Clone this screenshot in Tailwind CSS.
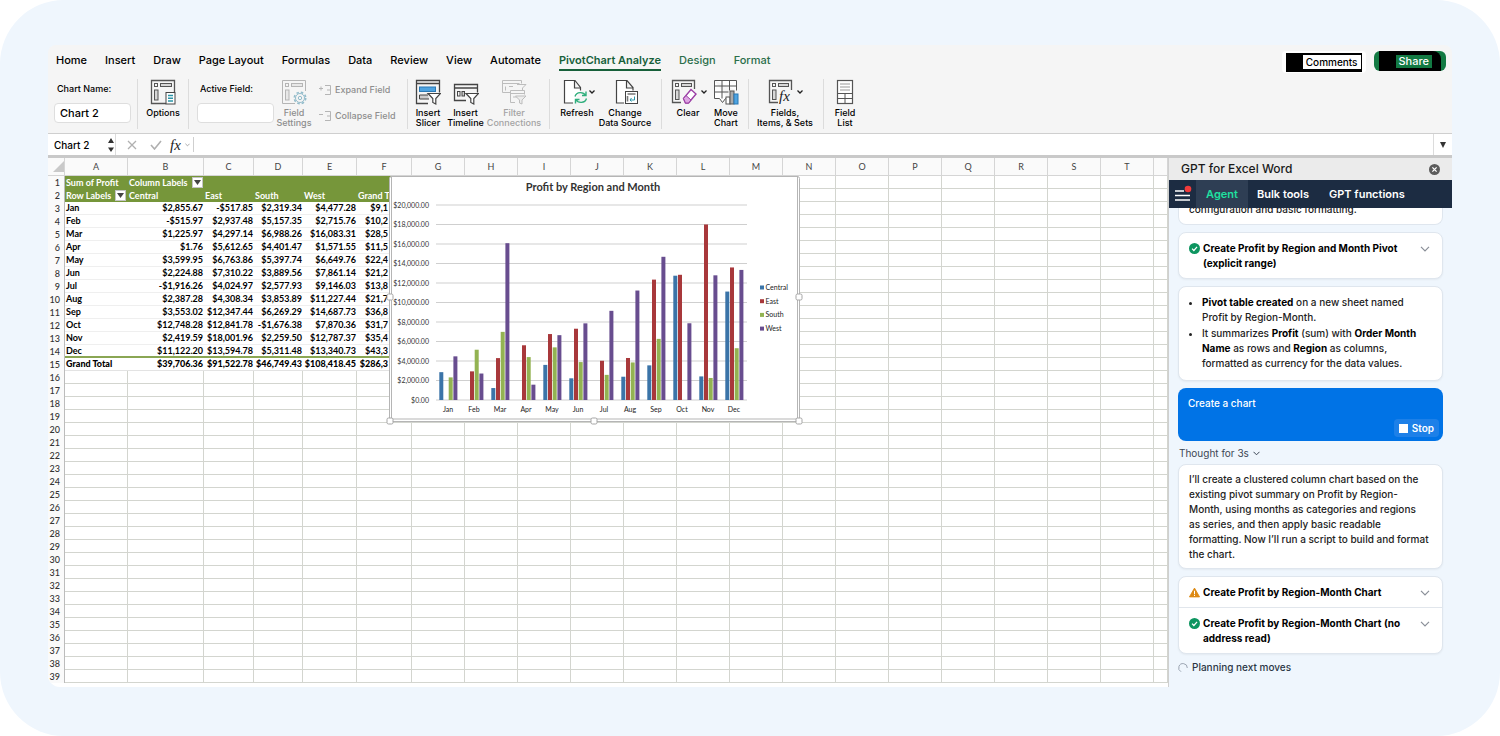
<!DOCTYPE html>
<html lang="en">

<head>
    <meta charset="UTF-8">
    <meta name="viewport" content="width=device-width, initial-scale=1.0">
    <title>Profit by Region-Month</title>
    <script src="https://cdn.jsdelivr.net/npm/@tailwindcss/browser@4"></script>
</head>

<body class="bg-white font-['Inter',sans-serif] text-[11px] text-[#1a1a1a]">
    <div class="bg-[#eff6fd] rounded-[64px] h-screen px-12 pt-[45px] pb-[49px] overflow-hidden">
        <div class="h-full flex flex-col rounded-bl-xl overflow-hidden">

            <!-- Tabs -->
            <header class="bg-[#f5f5f5] flex items-center justify-between pl-2 pr-[6px] h-[30px] rounded-t-lg shrink-0">
                <nav class="flex gap-[18px] font-medium text-black leading-[18px]">
                    <button>Home</button>
                    <button>Insert</button>
                    <button>Draw</button>
                    <button>Page Layout</button>
                    <button>Formulas</button>
                    <button>Data</button>
                    <button>Review</button>
                    <button>View</button>
                    <button>Automate</button>
                    <button class="relative font-semibold text-[#17603a]">PivotChart Analyze<span class="absolute inset-x-0 -bottom-[2px] h-[2px] bg-[#17603a]"></span></button>
                    <button class="text-[#2b6e4a]">Design</button>
                    <button class="text-[#2b6e4a]">Format</button>
                </nav>
                <div class="flex gap-2 font-medium pt-1">
                    <button class="bg-white rounded px-1 h-[22px] flex items-center text-[10px]">
                        <span class="bg-black pl-[17px] pr-[1px] h-[19px] flex items-center"><span class="bg-white px-[3px] leading-[14px] text-black">Comments</span></span>
                    </button>
                    <button class="bg-[#137a43] rounded-md pl-[5px] pr-[5px] h-[20px] flex items-center overflow-hidden">
                        <span class="bg-black pl-[17px] pr-[9px] h-[20px] flex items-center rounded-tr-lg"><span class="bg-[#137a43] px-[3px] leading-[13px] text-white">Share</span></span>
                    </button>
                </div>
            </header>

            <!-- Ribbon -->
            <section class="bg-[#f5f5f5] border-b border-[#cfcfcf] h-[59px] flex pt-1 pb-1 text-[9px] leading-[10px] font-medium text-black shrink-0">
                <div class="w-[90px] pl-[6px] border-r border-[#dcdcdc]">
                    <label for="chartName" class="block pl-[3px] pt-[5px] pb-[9px]">Chart Name:</label>
                    <input id="chartName" type="text" value="Chart 2" class="w-[77px] h-5 bg-white border border-[#dedede] rounded-sm px-[5px] text-[11px]">
                </div>
                <button class="w-[51px] border-r border-[#dcdcdc] flex flex-col items-center gap-[3px] justify-start">
                    <svg class="w-[26px] h-[26px]" viewBox="0 0 26 26" fill="none" stroke="#555">
                        <path d="M16 24.5H1.5v-23h23V13" stroke-width="1.3" />
                        <rect x="4.5" y="4.5" width="3" height="3" />
                        <rect x="10.5" y="4.5" width="11" height="3" fill="#d8d8d8" />
                        <rect x="4.5" y="11" width="3.5" height="10" fill="#d8d8d8" />
                        <rect x="16" y="13.5" width="9" height="11.5" fill="#fff" stroke="#444" />
                        <path d="M18 16.5h5M18 19.3h5M18 22h5" stroke="#2b95a8" stroke-width="1.4" />
                    </svg>
                    <span>Options</span>
                </button>
                <div class="w-[85px] pl-2">
                    <label for="activeField" class="block pl-[3px] pt-[5px] pb-[9px]">Active Field:</label>
                    <input id="activeField" type="text" class="w-[77px] h-5 bg-white border border-[#dedede] rounded-sm px-[5px] text-[11px]">
                </div>
                <button class="w-10 flex flex-col items-center gap-[3px] justify-start text-[#8e8e8e]">
                    <svg class="w-[26px] h-[26px]" viewBox="0 0 26 26" fill="none" stroke="#b5b5b5">
                        <path d="M14 24.5H1.5v-23h23V12" />
                        <rect x="4.5" y="4.5" width="3" height="3" />
                        <rect x="10.5" y="4.5" width="11" height="3" fill="#e8e8e8" />
                        <rect x="4.5" y="11" width="3.5" height="10" fill="#e8e8e8" />
                        <circle cx="19" cy="19" r="4.5" stroke="#93bccb" fill="#f5f5f5" />
                        <circle cx="19" cy="19" r="1.7" stroke="#93bccb" />
                        <circle cx="19" cy="19" r="5.7" stroke="#93bccb" stroke-width="1.6" stroke-dasharray="2.5 2" />
                    </svg>
                    <span>Field<br>Settings</span>
                </button>
                <div class="w-[94px] pl-[5px] border-r border-[#dcdcdc] text-[#8e8e8e] flex flex-col gap-4 pt-[6px]">
                    <button class="flex items-center gap-1 whitespace-nowrap">
                        <svg class="w-3 h-[10px]" viewBox="0 0 12 10" fill="none" stroke="#b5b5b5"><path d="M0 3.5h4M2 1.5v4M6 .5h5.5M8 5h3.5M6 9.5h5.5M11.5 .5v9" /></svg>
                        Expand Field
                    </button>
                    <button class="flex items-center gap-1 whitespace-nowrap">
                        <svg class="w-3 h-[10px]" viewBox="0 0 12 10" fill="none" stroke="#b5b5b5"><path d="M0 3.5h4M6 .5h5.5M8 5h3.5M6 9.5h5.5M11.5 .5v9" /></svg>
                        Collapse Field
                    </button>
                </div>
                <div class="w-[142px] border-r border-[#dcdcdc] flex">
                    <button class="w-10 flex flex-col items-center gap-[3px] justify-start">
                        <svg class="w-[26px] h-[26px]" viewBox="0 0 26 26" fill="none" stroke="#444">
                            <path d="M13 24.5H1.5v-23h23v12" stroke-width="1.3" />
                            <path d="M1.5 4.5h23" stroke-width="1.3" />
                            <rect x="4.5" y="8" width="16" height="4.5" fill="#4ea3e0" stroke="#2979b5" />
                            <path d="M14 20H4.5v-4H13" fill="#ccc" />
                            <path d="M13 14.5h12.5l-4.7 5v5.5l-3-1.5v-4z" fill="#fff" stroke-width="1.2" />
                        </svg>
                        <span>Insert<br>Slicer</span>
                    </button>
                    <button class="w-[35px] flex flex-col items-center gap-[3px] justify-start whitespace-nowrap">
                        <svg class="w-[26px] h-[26px]" viewBox="0 0 26 26" fill="none" stroke="#444">
                            <path d="M13 21.5H1.5v-16h23v8" stroke-width="1.3" />
                            <path d="M1.5 9h23" stroke-width="1.3" />
                            <rect x="4.5" y="12.5" width="2.5" height="4.5" />
                            <rect x="9" y="12.5" width="2.5" height="4.5" fill="#ccc" />
                            <path d="M13 14.5h12.5l-4.7 5v5.5l-3-1.5v-4z" fill="#fff" stroke-width="1.2" />
                        </svg>
                        <span>Insert<br>Timeline</span>
                    </button>
                    <button class="w-[62px] flex flex-col items-center gap-[3px] justify-start text-[#a3a3a3]">
                        <svg class="w-[26px] h-[26px]" viewBox="0 0 26 26" fill="none" stroke="#bdbdbd">
                            <path d="M9 13.5H1.5v-12h19v3M1.5 4.5h17M4.5 7.5v4M8 7.5h4" />
                            <path d="M16 5.5h9l-3.5 3.5v3" fill="#f5f5f5" />
                            <path d="M14 23.5H9.5v-12h14v4M9.5 14.5h14M12 18h4" />
                            <path d="M14.5 17h10.5l-4 4v4l-2.5-1v-3z" fill="#ececec" />
                        </svg>
                        <span>Filter<br>Connections</span>
                    </button>
                </div>
                <div class="w-[112px] pl-1 border-r border-[#dcdcdc] flex">
                    <button class="relative w-[46px] flex flex-col items-center gap-[3px] justify-start">
                        <svg class="w-[26px] h-[26px] -ml-1" viewBox="0 0 26 26" fill="none" stroke="#444">
                            <path d="M11 24H2.5v-22.5H13l5.5 7v3M12.5 1.5v7.5h6" fill="#fff" stroke-width="1.2" />
                            <path d="M13 17.5c1.5-5 8.5-5 10.5-1M24 12.5v4h-4M24.5 19.5c-1.5 5-8.5 5-10.5 1M13.5 24.5v-4h4" stroke="#2fae7c" stroke-width="1.4" />
                        </svg>
                        <span>Refresh</span>
                        <svg class="absolute right-[5px] top-[11px] w-[6px] h-1" viewBox="0 0 6 4" fill="none" stroke="#222" stroke-width="1.3"><path d="M.5 .5L3 3L5.5 .5" /></svg>
                    </button>
                    <button class="w-[50px] flex flex-col items-center gap-[3px] justify-start whitespace-nowrap">
                        <svg class="w-[26px] h-[26px]" viewBox="0 0 26 26" fill="none" stroke="#444">
                            <path d="M12 24H4.5v-22.5H15l6 7v3M14.5 1.5v7.5h6" fill="#fff" stroke-width="1.2" />
                            <rect x="13.5" y="12.5" width="12" height="12" fill="#fff" />
                            <path d="M15.5 15h8M15.5 17v5.5" stroke="#777" stroke-width="1.6" />
                            <path d="M18 21h4.5v-3.5M19.5 19l-1.5 2l1.5 1.5" stroke="#2b95a8" />
                        </svg>
                        <span>Change<br>Data Source</span>
                    </button>
                </div>
                <div class="w-[87px] border-r border-[#dcdcdc] flex">
                    <button class="relative w-[52px] flex flex-col items-center gap-[3px] justify-start">
                        <svg class="w-[26px] h-[26px] -ml-2" viewBox="0 0 26 26" fill="none" stroke="#555">
                            <path d="M10 23.5H1.5v-22h22V10" stroke-width="1.3" />
                            <rect x="4.5" y="4.5" width="3" height="3" />
                            <rect x="10.5" y="4.5" width="10" height="3" fill="#d8d8d8" />
                            <rect x="4.5" y="11" width="3.5" height="9.5" fill="#d8d8d8" />
                            <path d="M12.5 19.5l7.5-9 5 4.5-7.5 9h-3z" fill="#fff" stroke="#9b3fa5" stroke-width="1.4" />
                            <path d="M12.5 19.5l2.5-3 5 4.5-2.5 3h-3z" fill="#dda6e3" stroke="#9b3fa5" />
                        </svg>
                        <span>Clear</span>
                        <svg class="absolute right-[7px] top-[11px] w-[6px] h-1" viewBox="0 0 6 4" fill="none" stroke="#222" stroke-width="1.3"><path d="M.5 .5L3 3L5.5 .5" /></svg>
                    </button>
                    <button class="w-6 flex flex-col items-center gap-[3px] justify-start">
                        <svg class="w-[26px] h-[26px]" viewBox="0 0 26 26" fill="none" stroke="#555">
                            <path d="M1.5 1.5h22v10M1.5 1.5v18h5l3 4 3-4h2M1.5 7h22M1.5 13h14M9 1.5v18M16.5 1.5v10" fill="#fff" />
                            <rect x="13" y="18" width="4" height="7" fill="#fff" />
                            <rect x="17" y="12" width="4" height="13" fill="#aaa" />
                            <rect x="21" y="15" width="4" height="10" fill="#4ea3e0" stroke="#2979b5" />
                        </svg>
                        <span>Move<br>Chart</span>
                    </button>
                </div>
                <div class="w-[75px] border-r border-[#dcdcdc] flex">
                    <button class="relative w-[72px] flex flex-col items-center gap-[3px] justify-start whitespace-nowrap">
                        <svg class="w-[26px] h-[26px] -ml-2" viewBox="0 0 26 26" fill="none" stroke="#555">
                            <path d="M10 23.5H1.5v-22h22V11" stroke-width="1.3" />
                            <rect x="4.5" y="4.5" width="3" height="3" />
                            <rect x="10.5" y="4.5" width="10" height="3" fill="#d8d8d8" />
                            <rect x="4.5" y="11" width="3.5" height="9.5" fill="#d8d8d8" />
                            <text x="11" y="22" font-family="Liberation Serif, serif" font-style="italic" font-size="15" fill="#222" stroke="none">fx</text>
                        </svg>
                        <span>Fields,<br>Items, &amp; Sets</span>
                        <svg class="absolute right-[18px] top-[11px] w-[6px] h-1" viewBox="0 0 6 4" fill="none" stroke="#222" stroke-width="1.3"><path d="M.5 .5L3 3L5.5 .5" /></svg>
                    </button>
                </div>
                <button class="w-[42px] flex flex-col items-center gap-[3px] justify-start">
                    <svg class="w-[26px] h-[26px]" viewBox="0 0 26 26" fill="none" stroke="#555">
                        <rect x="5.5" y="1.5" width="15" height="23" fill="#fff" stroke-width="1.2" />
                        <path d="M8 5h10M8 8h10M8 11h10" stroke="#999" />
                        <path d="M5.5 14.5h15M5.5 19.5h15M13 14.5v10" />
                    </svg>
                    <span>Field<br>List</span>
                </button>
            </section>

            <!-- Formula bar -->
            <section class="bg-white h-6 border-b-[3px] border-[#c9c9c9] flex items-center shrink-0">
                <div class="w-[68px] h-full border-r border-[#dcdcdc] flex items-center justify-between pl-[6px] pr-[1px]">
                    <input type="text" value="Chart 2" aria-label="Name box" class="w-12 text-[10px] font-medium text-black leading-4">
                    <svg class="w-[6px] h-4" viewBox="0 0 6 16" fill="#333"><path d="M0 6L3 1L6 6zM0 10.5L3 15L6 10.5z" /></svg>
                </div>
                <button aria-label="Cancel" class="ml-[11px]"><svg class="w-[10px] h-[10px]" viewBox="0 0 10 10" stroke="#b0b0b0" stroke-width="1.3"><path d="M1 1l8 8M9 1l-8 8" /></svg></button>
                <button aria-label="Enter" class="ml-[13px]"><svg class="w-3 h-[10px]" viewBox="0 0 12 10" fill="none" stroke="#b0b0b0" stroke-width="1.6"><path d="M1 5l3.5 4L11 1" /></svg></button>
                <span class="ml-2 font-['Liberation_Serif',serif] italic text-[15px] leading-4 w-[15px] text-[#222]">fx</span>
                <svg class="w-[5px] h-1" viewBox="0 0 6 4" fill="none" stroke="#999"><path d="M.5 .5L3 3L5.5 .5" /></svg>
                <input type="text" aria-label="Formula" class="ml-[3px] h-[15px] border-l border-[#cfcfcf] grow">
                <button aria-label="Expand formula bar" class="w-[19px] h-full border-l border-[#dcdcdc] flex items-center justify-center"><svg class="w-[6px] h-[6px]" viewBox="0 0 6 6" fill="#333"><path d="M0 0h6L3 6z" /></svg></button>
            </section>

            <div class="flex grow min-h-0">
                <!-- Sheet -->
                <main class="relative grow min-w-0 overflow-hidden bg-white">
                    <table class="w-full table-fixed border-separate border-spacing-0 font-['Lato',sans-serif] text-[9px] leading-[12px] text-black">
                        <colgroup id="cols"></colgroup>
                        <thead><tr id="colHeads"></tr></thead>
                        <tbody id="rows"></tbody>
                    </table>

                    <svg class="absolute left-[338px] top-[14px] w-[418px] h-[256px] font-['Lato',sans-serif]" viewBox="386 172 418 256" id="chart" role="img" aria-label="Profit by Region and Month"></svg>
                </main>

                <!-- Add-in pane -->
                <aside class="w-[284px] shrink-0 border-l border-[#cfcfcf] bg-[#eff6fd] flex flex-col overflow-hidden">
                    <div class="bg-[#ebebeb] h-[22px] flex items-center justify-between pl-3 pr-3 text-[12px] font-medium shrink-0">
                        GPT for Excel Word
                        <button aria-label="Close"><svg class="w-[11px] h-[11px]" viewBox="0 0 12 12"><circle cx="6" cy="6" r="6" fill="#5c5c5c" /><path d="M3.7 3.7l4.6 4.6M8.3 3.7l-4.6 4.6" stroke="#fff" stroke-width="1.4" /></svg></button>
                    </div>
                    <div class="bg-[#1c2c42] h-7 flex items-center text-[11px] font-semibold text-white shrink-0">
                        <button aria-label="Menu" class="w-[27px] pl-[5px]"><svg class="w-[18px] h-[18px]" viewBox="0 0 18 18"><path d="M1 6h9M1 10.5h15M1 15h15" stroke="#fff" stroke-width="1.5" /><circle cx="14" cy="4" r="3.3" fill="#f23b3b" /></svg></button>
                        <button class="bg-[#2e3e54] h-full w-[52px] text-[#1fe0a0]">Agent</button>
                        <button class="ml-[9px]">Bulk tools</button>
                        <button class="ml-5">GPT functions</button>
                    </div>

                    <div class="px-[9px] text-[10px] leading-[15px] flex flex-col">
                        <div class="h-[17px] overflow-hidden flex flex-col justify-end bg-white border border-t-0 border-[#dfe6ee] rounded-b-lg px-[10px] pb-[7px] font-medium">
                            <p>configuration and basic formatting.</p>
                        </div>

                        <div class="mt-[7px] bg-white border border-[#dfe6ee] rounded-lg shadow-xs px-[10px] pt-2 pb-[7px] flex items-start">
                            <svg class="w-[11px] h-[11px] mt-[2px] shrink-0" viewBox="0 0 12 12" fill="none"><circle cx="6" cy="6" r="6" fill="#0d9560" /><path d="M3.3 6.2l2 2 3.5-4" stroke="#fff" stroke-width="1.3" /></svg>
                            <p class="font-bold text-black ml-[3px] grow">Create Profit by Region and Month Pivot (explicit range)</p>
                            <button aria-label="Expand" class="w-5 shrink-0 flex justify-end pt-[5px] pr-[2px]"><svg class="w-[10px] h-[6px]" viewBox="0 0 10 6" fill="none" stroke="#8a8f98" stroke-width="1.2"><path d="M1 .8l4 4 4-4" /></svg></button>
                        </div>

                        <ul class="mt-[7px] bg-white border border-[#dfe6ee] rounded-lg shadow-xs pl-[23px] pr-3 pt-2 pb-[9px] list-disc font-medium text-[#222]">
                            <li><b class="font-bold text-black">Pivot table created</b> on a new sheet named<br>Profit by Region-Month.</li>
                            <li class="mt-[1px]">It summarizes <b class="font-bold text-black">Profit</b> (sum) with <b class="font-bold text-black">Order Month Name</b> as rows and <b class="font-bold text-black">Region</b> as columns,<br>formatted as currency for the data values.</li>
                        </ul>

                        <div class="mt-[7px] bg-[#0073e6] text-white rounded-lg h-[53px] pt-2 pl-[10px] pr-1 pb-1 flex flex-col justify-between font-medium">
                            <p>Create a chart</p>
                            <button class="self-end bg-[#1d80e8] rounded px-[5px] h-[18px] flex items-center gap-1 font-semibold"><span class="w-[9px] h-[9px] bg-white"></span>Stop</button>
                        </div>

                        <button class="mt-[5px] text-[#3c4654] flex items-center gap-1 pl-[1px]">Thought for 3s
                            <svg class="w-[7px] h-[5px]" viewBox="0 0 7 5" fill="none" stroke="#3c4654"><path d="M.5 .8l3 3 3-3" /></svg>
                        </button>

                        <p class="mt-[3px] bg-white border border-[#dfe6ee] rounded-lg shadow-xs pl-[10px] pr-1 pt-[7px] pb-[6px] font-medium text-[#222]">I’ll create a clustered column chart based on the<br>existing pivot summary on Profit by Region-<br>Month, using months as categories and regions<br>as series, and then apply basic readable<br>formatting. Now I’ll run a script to build and format<br>the chart.</p>

                        <div class="mt-[7px] bg-white border border-[#dfe6ee] rounded-lg shadow-xs font-bold text-black">
                            <div class="px-[10px] pt-2 pb-[7px] flex items-start border-b border-[#e1e6ec]">
                                <svg class="w-[11px] h-[11px] mt-[2px] shrink-0" viewBox="0 0 12 12"><path d="M6 1.2L11.5 10.8H.5z" fill="#dd8a14" stroke="#dd8a14" stroke-linejoin="round" /><path d="M6 4.2v3.3M6 8.5v1.2" stroke="#fff" stroke-width="1.1" /></svg>
                                <p class="ml-[3px] grow">Create Profit by Region-Month Chart</p>
                                <button aria-label="Expand" class="w-5 shrink-0 flex justify-end pt-[5px] pr-[2px]"><svg class="w-[10px] h-[6px]" viewBox="0 0 10 6" fill="none" stroke="#8a8f98" stroke-width="1.2"><path d="M1 .8l4 4 4-4" /></svg></button>
                            </div>
                            <div class="px-[10px] pt-2 pb-[7px] flex items-start">
                                <svg class="w-[11px] h-[11px] mt-[2px] shrink-0" viewBox="0 0 12 12" fill="none"><circle cx="6" cy="6" r="6" fill="#0d9560" /><path d="M3.3 6.2l2 2 3.5-4" stroke="#fff" stroke-width="1.3" /></svg>
                                <p class="ml-[3px] grow">Create Profit by Region-Month Chart (no address read)</p>
                                <button aria-label="Expand" class="w-5 shrink-0 flex justify-end pt-[5px] pr-[2px]"><svg class="w-[10px] h-[6px]" viewBox="0 0 10 6" fill="none" stroke="#8a8f98" stroke-width="1.2"><path d="M1 .8l4 4 4-4" /></svg></button>
                            </div>
                        </div>

                        <div class="mt-[6px] flex items-center gap-1 font-medium text-[#2b3645]">
                            <svg class="w-[10px] h-[10px]" viewBox="0 0 10 10" fill="none" stroke="#9aa3b0"><path d="M3 8.7A4.3 4.3 0 1 1 9.3 5" /></svg>
                            Planning next moves
                        </div>
                    </div>
                </aside>
            </div>
        </div>
    </div>

    <script>
        const letters = "ABCDEFGHIJKLMNOPQRST".split("");
        const widths = [17, 63, 76, 50, 49, 54, 55];
        const months = ["Jan", "Feb", "Mar", "Apr", "May", "Jun", "Jul", "Aug", "Sep", "Oct", "Nov", "Dec"];
        const profit = [
            [2855.67, -517.85, 2319.34, 4477.28],
            [-515.97, 2937.48, 5157.35, 2715.76],
            [1225.97, 4297.14, 6988.26, 16083.31],
            [1.76, 5612.65, 4401.47, 1571.55],
            [3599.95, 6763.86, 5397.74, 6649.76],
            [2224.88, 7310.22, 3889.56, 7861.14],
            [-1916.26, 4024.97, 2577.93, 9146.03],
            [2387.28, 4308.34, 3853.89, 11227.44],
            [3553.02, 12347.44, 6269.29, 14687.73],
            [12748.28, 12841.78, -1676.38, 7870.36],
            [2419.59, 18001.96, 2259.50, 12787.37],
            [11122.20, 13594.78, 5311.48, 13340.73]
        ];
        // last visible column is cut off by the chart
        const totals = ["$9,1", "$10,2", "$28,5", "$11,5", "$22,4", "$21,2", "$13,8", "$21,7", "$36,8", "$31,7", "$35,4", "$43,3"];

        const money = (n) => (n < 0 ? "-" : "") + "$" + Math.abs(n).toLocaleString("en-US", { minimumFractionDigits: 2, maximumFractionDigits: 2 });
        const filter = '<button aria-label="Filter" class="inline-flex w-[11px] h-[11px] ml-[2px] bg-white border border-[#c4c4c4] items-center justify-center align-top"><svg class="w-[7px] h-[5px]" viewBox="0 0 7 5" fill="#444"><path d="M0 0h7L3.5 5z"/></svg></button>';

        const sheet = [
            ["Sum of Profit", "Column Labels " + filter],
            ["Row Labels " + filter, "Central", "East", "South", "West", "Grand T"]
        ];
        months.forEach((m, i) => sheet.push([m, ...profit[i].map(money), totals[i]]));
        sheet.push(["Grand Total", "$39,706.36", "$91,522.78", "$46,749.43", "$108,418.45", "$286,3"]);

        for (let i = 0; i < 22; i++) {
            const w = i < 7 ? widths[i] : 53;
            document.getElementById("cols").innerHTML += i === 21 ? "<col>" : `<col style="width:${w}px">`;
        }

        const headClass = "h-[18px] p-0 font-normal text-[#444] bg-[#fafafa] border-r border-b border-[#d5d5d5]";
        document.getElementById("colHeads").innerHTML =
            '<th class="h-[18px] p-0 bg-[#fafafa] border-r border-b border-[#d5d5d5]"><svg class="w-[11px] h-[11px] ml-auto" viewBox="0 0 11 11" fill="#c9c9c9"><path d="M11 0v11H0z"/></svg></th>' +
            letters.map((l) => `<th class="${headClass}">${l}</th>`).join("") + `<th class="${headClass}"></th>`;

        let html = "";
        for (let r = 1; r <= 39; r++) {
            html += '<tr><th class="h-[13px] p-0 pr-1 text-right font-medium text-[#333] border-r border-[#bcbcbc] bg-[#fafafa] leading-[12px]">' + r + "</th>";
            for (let c = 0; c < 21; c++) {
                const text = (sheet[r - 1] || [])[c] || "";
                let cls = "h-[13px] p-0 border-r border-b border-[#d3d5cf]";
                if (r <= 2 && c < 6) cls = "h-[13px] p-0 pl-[1px] bg-[#76963a] text-white font-bold whitespace-nowrap";
                else if (r === 14 && c < 6) cls = "h-[13px] p-0 px-[1px] border-b-2 border-[#8aa653] font-bold whitespace-nowrap overflow-hidden leading-[11px]";
                else if (r === 15 && c < 6) cls = "h-[13px] p-0 px-[1px] border-b border-[#e3e3e3] font-black whitespace-nowrap overflow-hidden";
                else if (r > 2 && r < 14 && c < 6) cls = "h-[13px] p-0 px-[1px] border-b border-[#efefef] font-bold whitespace-nowrap overflow-hidden";
                if (r > 2 && r < 16 && c > 0 && c < 5) cls += " text-right";
                if (r > 2 && r < 16 && c === 5) {
                    html += `<td class="${cls}"><div class="w-[30px] text-right">${text}</div></td>`;
                } else {
                    html += `<td class="${cls}">${text}</td>`;
                }
            }
            html += "</tr>";
        }
        document.getElementById("rows").innerHTML = html;

        // chart
        const colors = ["#3b74a8", "#a8383b", "#93b352", "#684d8f"];
        const regions = ["Central", "East", "South", "West"];
        let svg = '<rect x="389.5" y="176.5" width="410" height="245" rx="2" fill="#fff" stroke="#b5b5b5"/><rect x="391.5" y="176.5" width="406" height="242.5" fill="none" stroke="#b5b5b5"/>';
        svg += '<text x="593" y="191" text-anchor="middle" font-size="11" font-weight="700" fill="#333">Profit by Region and Month</text>';
        for (let i = 0; i <= 10; i++) {
            const y = 400 - i * 19.5;
            svg += `<path d="M436 ${y}H747" stroke="#cfcfcf"/>`;
            svg += `<text x="429" y="${y + 2.5}" text-anchor="end" font-size="7" fill="#333">${money(i * 2000)}</text>`;
        }
        months.forEach((m, i) => {
            svg += `<text x="${448 + i * 26}" y="412" text-anchor="middle" font-size="7" fill="#222">${m}</text>`;
            profit[i].forEach((v, j) => {
                if (v < 100) return;
                const h = v / 20000 * 195;
                svg += `<rect x="${439.3 + i * 26 + j * 4.7}" y="${400 - h}" width="4" height="${h}" fill="${colors[j]}"/>`;
            });
        });
        regions.forEach((name, i) => {
            svg += `<rect x="760" y="${285.5 + i * 13.7}" width="4" height="4" fill="${colors[i]}"/><text x="765.5" y="${290 + i * 13.7}" font-size="7" fill="#222">${name}</text>`;
        });
        [[390, 421], [594, 421], [799, 421], [390, 297], [799, 297]].forEach(([x, y]) => {
            svg += `<rect x="${x - 3}" y="${y - 3}" width="6" height="6" rx="1.5" fill="#fff" stroke="#a5a5a5"/>`;
        });
        document.getElementById("chart").innerHTML = svg;
    </script>
</body>

</html>
